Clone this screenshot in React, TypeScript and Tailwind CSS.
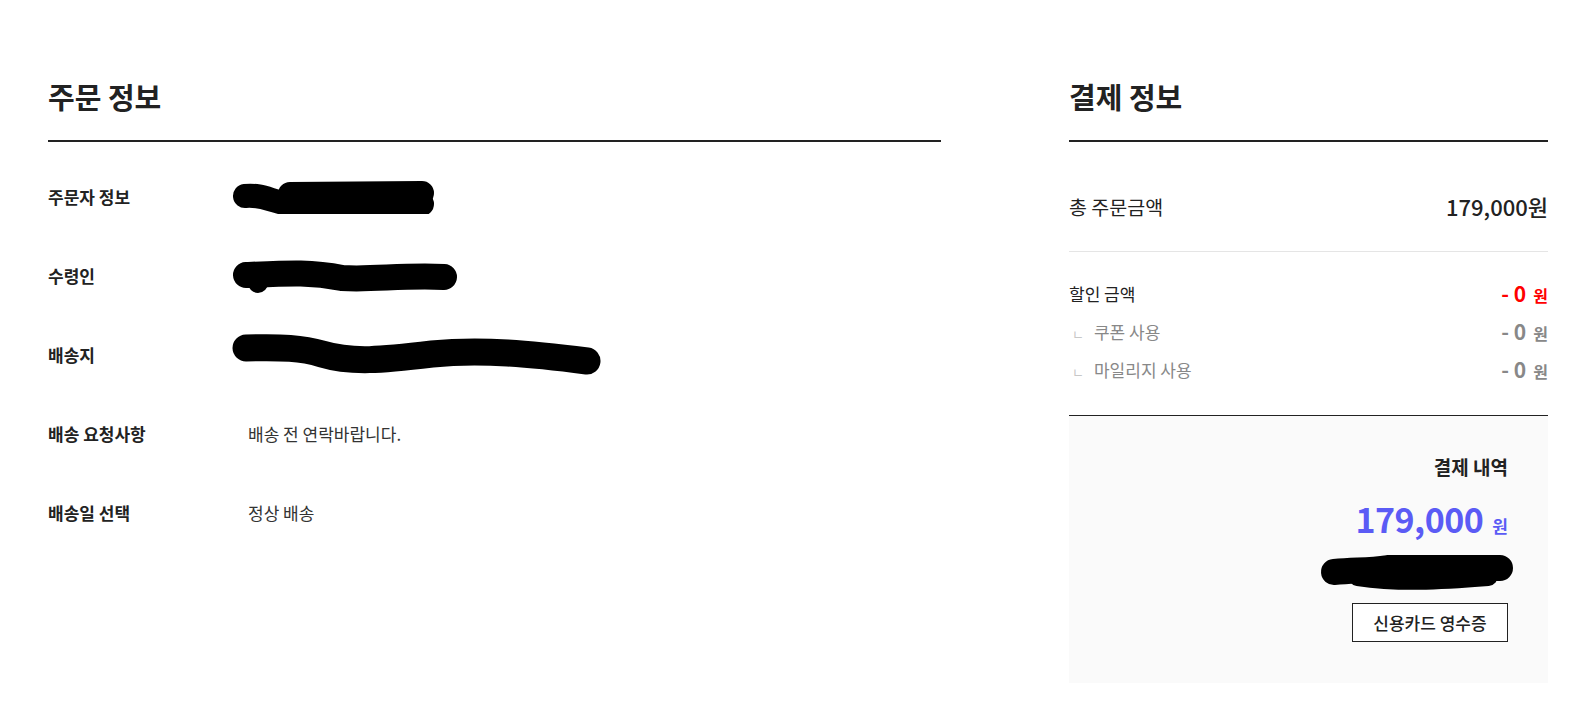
import React from "react";

const rows = [
  { label: "주문자 정보", redact: "short" },
  { label: "수령인", redact: "mid" },
  { label: "배송지", redact: "long" },
  { label: "배송 요청사항", value: "배송 전 연락바랍니다." },
  { label: "배송일 선택", value: "정상 배송" },
];

// hand-drawn black marker strokes over personal info
function Redact({ kind }: { kind: string }) {
  if (kind === "short") {
    return (
      <svg width="210" height="34" viewBox="0 0 210 34" className="block">
        <path d="M13 16 C 30 14, 40 22, 58 24 L 190 24" stroke="#000" strokeWidth="24" strokeLinecap="round" fill="none" />
        <path d="M58 14 L 190 13" stroke="#000" strokeWidth="24" strokeLinecap="round" fill="none" />
      </svg>
    );
  }
  if (kind === "mid") {
    return (
      <svg width="226" height="40" viewBox="0 0 226 40" className="block">
        <path d="M14 19 C 60 17, 80 16, 110 22 C 140 24, 170 19, 212 21" stroke="#000" strokeWidth="26" strokeLinecap="round" fill="none" />
        <circle cx="26" cy="27" r="10" fill="#000" />
      </svg>
    );
  }
  return (
    <svg width="370" height="46" viewBox="0 0 370 46" className="block">
      <path d="M14 16 C 50 15, 70 16, 90 22 C 120 31, 150 28, 200 22 C 250 17, 300 22, 355 29" stroke="#000" strokeWidth="27" strokeLinecap="round" fill="none" />
    </svg>
  );
}

export default function App() {
  return (
    <div className="w-[1587px] h-[711px] bg-white overflow-hidden font-['Noto_Sans_CJK_KR',sans-serif] text-[#222]">
      <div className="flex pl-[48px] pr-[39px] pt-[75px] gap-[128px]">
        {/* left : order info */}
        <div className="flex-1">
          <h2 className="text-[29px] leading-[42px] font-bold text-[#222]">주문 정보</h2>
          <div className="mt-[23px] border-t-2 border-[#222]" />
          <div className="mt-[15px]">
            {rows.map((row) => (
              <div key={row.label} className="flex items-center h-[79px]">
                <div className="w-[200px] text-[17px] font-bold text-[#222]">{row.label}</div>
                {row.redact ? (
                  <div className="-ml-[16px]">
                    <Redact kind={row.redact} />
                  </div>
                ) : (
                  <div className="text-[17px] text-[#333]">{row.value}</div>
                )}
              </div>
            ))}
          </div>
        </div>

        {/* right : payment info */}
        <div className="w-[479px]">
          <h2 className="text-[29px] leading-[42px] font-bold text-[#222]">결제 정보</h2>
          <div className="mt-[23px] border-t-2 border-[#222]" />
          <div className="flex items-center justify-between pt-[51px] pb-[31px] border-b border-[#e5e5e5]">
            <span className="text-[19.5px] leading-[27px]">총 주문금액</span>
            <span className="text-[22px] leading-[27px] font-medium">179,000원</span>
          </div>

          <div className="pt-[23px] pb-[26px] border-b border-[#222]">
            <div className="flex items-center justify-between h-[38px]">
              <span className="text-[17px] text-[#222]">할인 금액</span>
              <span className="text-[#ff0000] font-bold">
                <span className="text-[21px]">- 0</span>
                <span className="text-[16px] ml-[7px]">원</span>
              </span>
            </div>
            <div className="flex items-center justify-between h-[38px]">
              <span className="text-[17px] text-[#888]">
                <span className="text-[#c8c8c8] text-[13px] ml-[3px] mr-[10px]">ㄴ</span>쿠폰 사용
              </span>
              <span className="text-[#888] font-bold">
                <span className="text-[21px]">- 0</span>
                <span className="text-[16px] ml-[7px]">원</span>
              </span>
            </div>
            <div className="flex items-center justify-between h-[38px]">
              <span className="text-[17px] text-[#888]">
                <span className="text-[#c8c8c8] text-[13px] ml-[3px] mr-[10px]">ㄴ</span>마일리지 사용
              </span>
              <span className="text-[#888] font-bold">
                <span className="text-[21px]">- 0</span>
                <span className="text-[16px] ml-[7px]">원</span>
              </span>
            </div>
          </div>

          <div className="bg-[#fafafa] h-[267px] pt-[37px] pr-[40px] flex flex-col items-end">
            <div className="text-[19px] leading-[28px] font-bold text-[#222]">결제 내역</div>
            <div className="mt-[17px] flex items-baseline text-[#5b5bf5] font-bold">
              <span className="text-[34px] leading-[42px] tracking-[-0.5px]">179,000</span>
              <span className="text-[17px] ml-[9px]">원</span>
            </div>
            <div className="mt-[12px] -mr-[10px]">
              <svg width="200" height="40" viewBox="0 0 200 40" className="block">
                <path d="M16 20 C 40 18, 50 19, 70 16 L 182 16" stroke="#000" strokeWidth="26" strokeLinecap="round" fill="none" />
                <path d="M40 24 C 80 30, 120 28, 170 24" stroke="#000" strokeWidth="20" strokeLinecap="round" fill="none" />
              </svg>
            </div>
            <button className="mt-[11px] w-[156px] h-[39px] border border-[#222] bg-white text-[17px] font-medium text-[#222]">
              신용카드 영수증
            </button>
          </div>
        </div>
      </div>
    </div>
  );
}
